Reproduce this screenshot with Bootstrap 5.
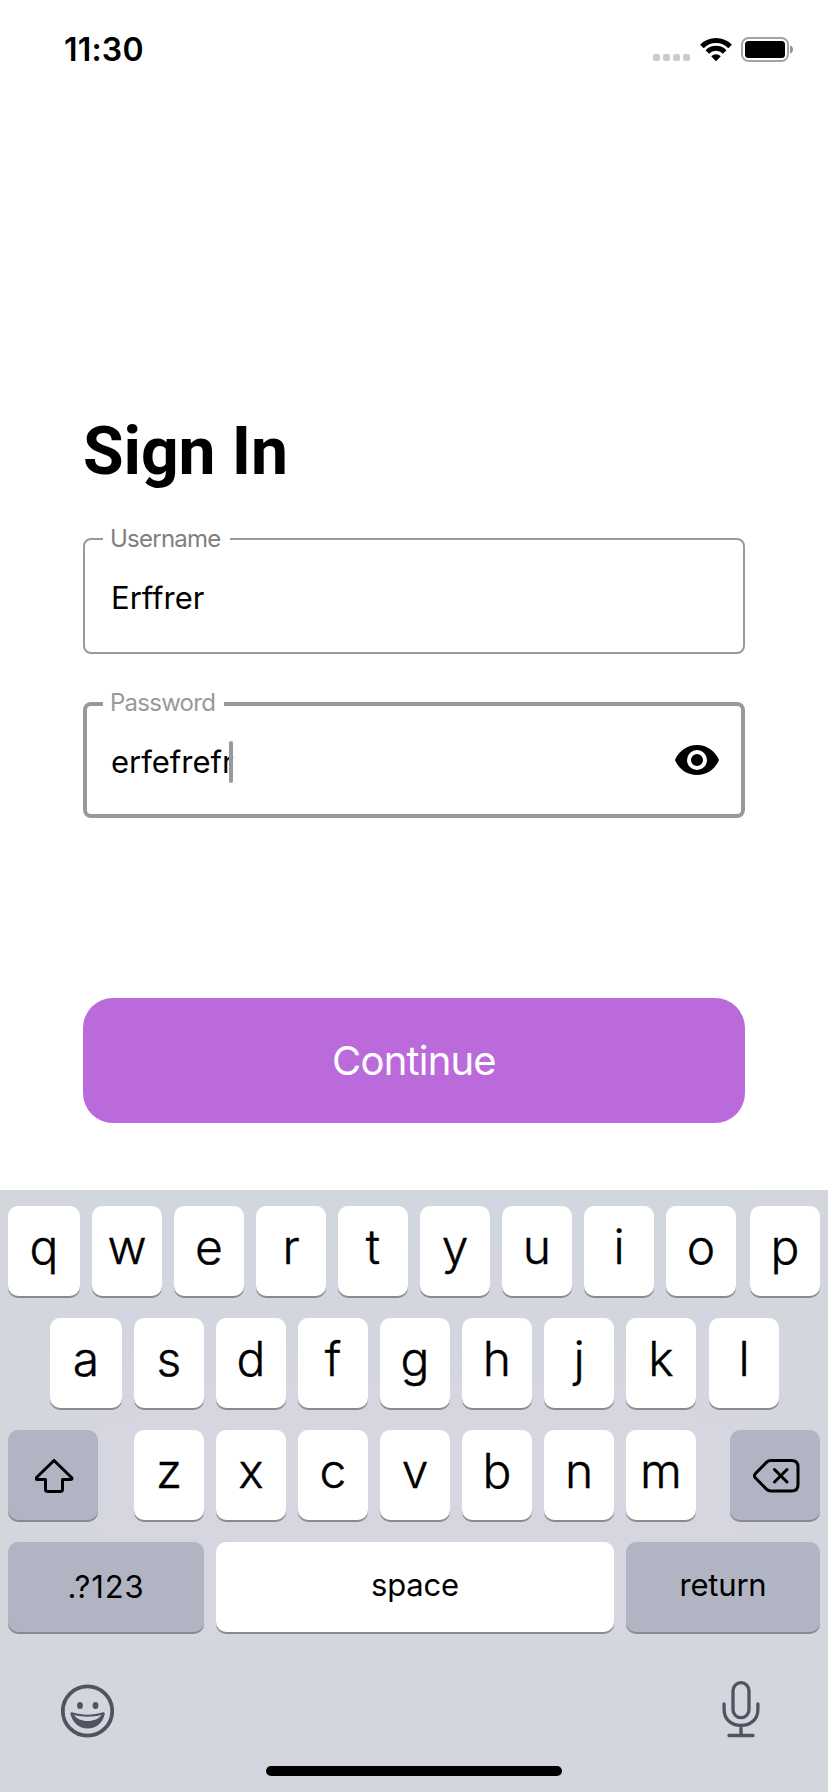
<!DOCTYPE html>
<html lang="en">
<head>
<meta charset="utf-8">
<meta name="viewport" content="width=device-width, initial-scale=1">
<title>Sign In</title>
<link href="https://cdn.jsdelivr.net/npm/bootstrap@5.3.0/dist/css/bootstrap.min.css" rel="stylesheet">
<style>
  body { font-family: Inter, "Liberation Sans", sans-serif; color: #000; background: #fff; font-variant-ligatures: no-common-ligatures; }
  .screen { width: 828px; height: 1792px; }
  .status { height: 100px; padding: 37px 34px 0 64px; }
  .clock { font-size: 32px; font-weight: 600; line-height: 26px; letter-spacing: .2px; }
  .signal { gap: 3px; margin: 17px 10px 0 0; }
  .signal span { width: 7px; height: 7px; border-radius: 2px; background: #cbcbcb; }
  .form-area { height: 1090px; padding: 313px 83px 0; }
  .title { font: 700 66px/78px Roboto, sans-serif; letter-spacing: -.1px; margin: 0 0 47px 0; }
  .field { height: 116px; border: 2px solid #999; border-radius: 8px; padding: 0 24px 0 26px; margin-bottom: 48px; font-size: 31px; }
  .field.active { border-width: 4px; padding: 0 22px 0 24px; margin-bottom: 180px; }
  .field-label { position: absolute; left: 18px; top: -16px; height: 28px; padding: 0 7px; background: #fff; color: #808080; font-size: 24px; line-height: 29px; letter-spacing: -.75px; }
  .active .field-label { left: 16px; top: -18px; color: #999; }
  .field-text { line-height: 38px; letter-spacing: 0; margin-top: 3px; }
  .active .field-text { letter-spacing: 0; width: 120px; white-space: nowrap; }
  .caret { width: 4px; height: 42px; border-radius: 2px; background: #999; margin: 4px 0 0 -2px; }
  .btn-continue, .btn-continue:hover { height: 125px; border: 0; border-radius: 30px; background: #ba6ada; color: #fff; font-size: 40px; line-height: 125px; padding: 0; letter-spacing: -.8px; }
  .keyboard { height: 602px; padding: 16px 8px 0;
    background: linear-gradient(90deg, #d3d6db 0, rgba(211,214,223,.7) 5%, rgba(211,214,223,0) 18%, rgba(211,214,223,0) 84%, #d3d6dc 100%),
      linear-gradient(#d2d6df 0, #d3d6df 22%, #d6d6e0 38%, #d6d6e0 74%, #d3d6df 76%, #d3d6df 100%); }
  .key-row { height: 90px; margin-bottom: 22px; gap: 12px; }
  .keycap { width: 70px; height: 90px; border-radius: 10px; background: #fff; box-shadow: 0 2px 0 #8a8a91; text-align: center; font-size: 48px; font-weight: 300; -webkit-text-stroke: .4px #000; line-height: 81px; flex: none; }
  .keycap.edge { width: 72px; }
  .keycap.dark { background: #b1b4c2; }
  .keycap.word { font-size: 31px; font-weight: 400; -webkit-text-stroke: 0; line-height: 85px; letter-spacing: -.2px; }
  .tools { height: 60px; margin: 47px 60px 0 52px; }
  .home-bar { width: 296px; height: 10px; border-radius: 5px; background: #000; margin: 27px auto 0; }
  svg { display: block; flex: none; }
</style>
</head>
<body>
<main class="screen d-flex flex-column overflow-hidden">
  <header class="status d-flex align-items-start">
    <div class="clock me-auto">11:30</div>
    <div class="signal d-flex"><span></span><span></span><span></span><span></span></div>
    <svg width="32" height="25" viewBox="0 0 32 25" class="me-2">
      <g fill="none" stroke="#000" stroke-width="5">
        <path d="M1.9 9.4a19.8 19.8 0 0 1 28.2 0"/>
        <path d="M7.3 15a12.2 12.2 0 0 1 17.4 0"/>
      </g>
      <path d="M11.2 19.2a7 7 0 0 1 9.6 0L16 24.2z"/>
    </svg>
    <svg width="54" height="25" viewBox="0 0 54 25">
      <rect x="2" y="1" width="46" height="23" rx="6.5" fill="none" stroke="#a3a3a3" stroke-width="2"/>
      <rect x="5" y="4" width="40" height="17" rx="3.5"/>
      <path d="M50 8.500c4 1 4 7 0 8z" fill="#929292"/>
    </svg>
  </header>

  <section class="form-area">
    <h1 class="title">Sign In</h1>
    <div class="field d-flex align-items-center position-relative">
      <span class="field-label" style="width:127px">Username</span>
      <span class="field-text">Erffrer</span>
    </div>
    <div class="field active d-flex align-items-center position-relative">
      <span class="field-label" style="width:121px">Password</span>
      <span class="field-text">erfefrefr</span><span class="caret"></span>
      <svg class="ms-auto" width="44" height="30" viewBox="1 4.5 22 15">
        <path d="M12 4.500C7 4.500 2.730 7.610 1 12c1.730 4.390 6 7.500 11 7.500s9.270-3.110 11-7.500c-1.730-4.390-6-7.500-11-7.500zM12 17a5 5 0 1 1 0-10 5 5 0 0 1 0 10zm0-8a3 3 0 1 0 0 6 3 3 0 0 0 0-6z"/>
      </svg>
    </div>
    <button type="button" class="btn btn-continue w-100 d-block">Continue</button>
  </section>

  <section class="keyboard">
    <div class="key-row d-flex">
      <div class="keycap edge">q</div><div class="keycap">w</div><div class="keycap">e</div><div class="keycap">r</div><div class="keycap">t</div><div class="keycap">y</div><div class="keycap">u</div><div class="keycap">i</div><div class="keycap">o</div><div class="keycap ms-auto">p</div>
    </div>
    <div class="key-row d-flex" style="padding:0 41px 0 42px">
      <div class="keycap edge">a</div><div class="keycap">s</div><div class="keycap">d</div><div class="keycap">f</div><div class="keycap">g</div><div class="keycap">h</div><div class="keycap">j</div><div class="keycap">k</div><div class="keycap ms-auto">l</div>
    </div>
    <div class="key-row d-flex">
      <div class="keycap dark d-flex align-items-center justify-content-center" style="width:90px;margin-right:24px">
        <svg width="40" height="36" viewBox="0 0 40 36" fill="none" stroke="#000" stroke-width="3" stroke-linejoin="round" class="ms-1 mt-1">
          <path d="M19 1.500 1.500 18.500c-.9 1-.6 1.900.7 1.900h8.300v10.200c0 1.200.6 1.800 1.800 1.800h13.400c1.200 0 1.800-.6 1.800-1.800V20.400h8.300c1.300 0 1.600-.9.700-1.900z"/>
        </svg>
      </div>
      <div class="keycap">z</div><div class="keycap">x</div><div class="keycap">c</div><div class="keycap">v</div><div class="keycap">b</div><div class="keycap">n</div><div class="keycap">m</div>
      <div class="keycap dark ms-auto d-flex align-items-center justify-content-center" style="width:90px">
        <svg width="48" height="36" viewBox="0 0 48 36" fill="none" stroke="#000" stroke-width="3" stroke-linecap="round" stroke-linejoin="round" class="mt-1 ms-1">
          <path d="M18 1.500h20.500c4.300 0 6.500 2.200 6.500 6.500v17.500c0 4.300-2.200 6.500-6.500 6.500H18c-2 0-3.200-.5-4.600-1.900L2.500 19c-1.500-1.700-1.500-2.800 0-4.500L13.400 3.400C14.800 2 16 1.500 18 1.500zM21.500 10.500l12.500 12.500M34 10.500l-12.500 12.500"/>
        </svg>
      </div>
    </div>
    <div class="key-row d-flex">
      <div class="keycap dark word" style="width:196px;line-height:89px;letter-spacing:.9px">.?123</div>
      <div class="keycap word" style="width:398px">space</div>
      <div class="keycap dark word" style="width:194px">return</div>
    </div>
    <div class="tools d-flex justify-content-between">
      <svg width="54" height="54" viewBox="0 0 54 54" fill="#50545e" style="margin-top:5px">
        <circle cx="27.500" cy="27" r="24.700" fill="none" stroke="#50545e" stroke-width="3.800"/>
        <ellipse cx="20" cy="21.500" rx="2.900" ry="3.500"/><ellipse cx="35.500" cy="21.500" rx="2.900" ry="3.500"/>
        <path fill-rule="evenodd" d="M12 28.300c10.300 3.300 20.700 3.300 31 0 1.500-.2 2 .6 1.700 2C42.800 38.500 36.500 44.600 27.700 44.600S12.700 38.500 10.500 30.300c-.3-1.400.2-2.200 1.500-2zM14 31c2.600 3.700 7.500 6 13.700 6s11.200-2.300 13.800-6c-9.200 2.200-18.300 2.200-27.500 0z"/>
      </svg>
      <svg width="38" height="57" viewBox="0 0 38 57" fill="none" stroke="#50545e" stroke-width="3.300" stroke-linecap="round" style="margin-top:2px">
        <rect x="11" y="1.700" width="16" height="35" rx="8"/>
        <path d="M2.100 23v5.500C2.100 38 9 44.500 19 44.500S35.900 38 35.900 28.500V23M19 44.500v10M7 54.500h24"/>
      </svg>
    </div>
    <div class="home-bar"></div>
  </section>
</main>
<script src="https://cdn.jsdelivr.net/npm/bootstrap@5.3.0/dist/js/bootstrap.bundle.min.js"></script>
</body>
</html>
